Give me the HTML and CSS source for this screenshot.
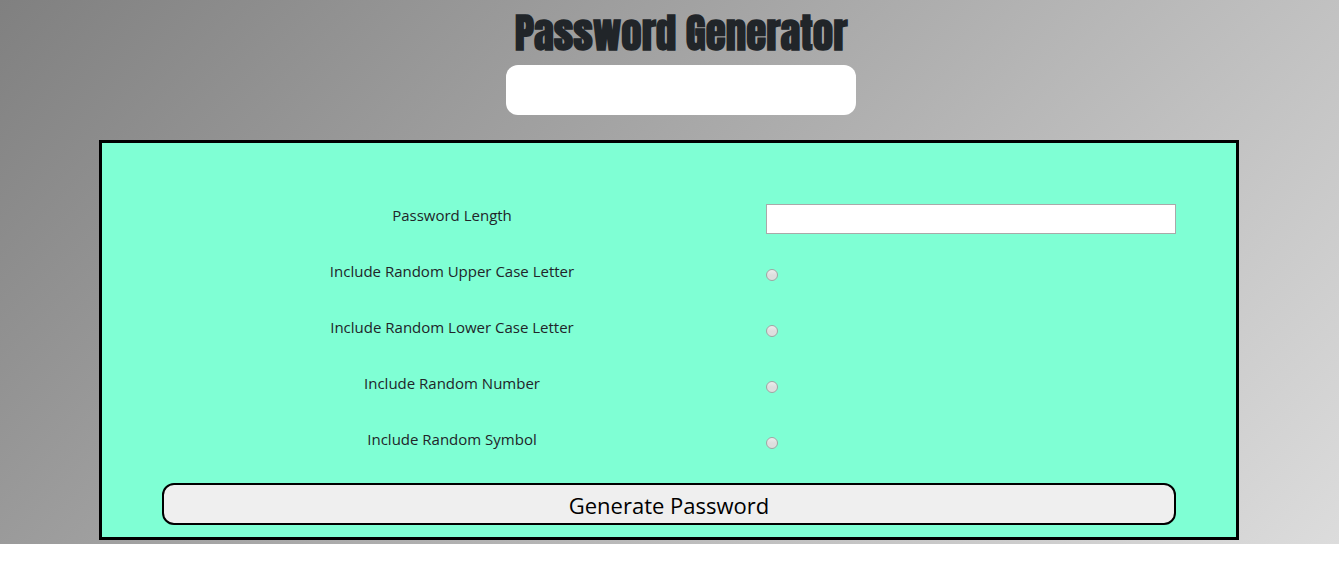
FILE: index.html
```html
<!DOCTYPE html>
<html lang="en">
<head>
<meta charset="utf-8">
<title>Password Generator</title>
<link rel="stylesheet" href="styles.css">
</head>
<body>
<main class="page">
  <header class="header">
    <h1 class="title">Password Generator</h1>
    <output class="result" aria-label="Generated password"></output>
  </header>
  <form class="panel">
    <div class="row">
      <label class="label" for="length">Password Length</label>
      <div class="field"><input class="text" id="length" type="text"></div>
    </div>
    <div class="row">
      <label class="label" for="upper">Include Random Upper Case Letter</label>
      <div class="field"><input class="radio" id="upper" type="radio"></div>
    </div>
    <div class="row">
      <label class="label" for="lower">Include Random Lower Case Letter</label>
      <div class="field"><input class="radio" id="lower" type="radio"></div>
    </div>
    <div class="row">
      <label class="label" for="number">Include Random Number</label>
      <div class="field"><input class="radio" id="number" type="radio"></div>
    </div>
    <div class="row">
      <label class="label" for="symbol">Include Random Symbol</label>
      <div class="field"><input class="radio" id="symbol" type="radio"></div>
    </div>
    <button class="generate" type="button">Generate Password</button>
  </form>
</main>
</body>
</html>
```
FILE: styles.css
```css
* {
  box-sizing: border-box;
}

body {
  margin: 0;
  background: #fff;
  color: #212529;
  font-family: "Segoe UI", "Open Sans", "Noto Sans", sans-serif;
  font-size: 15px;
  line-height: 24px;
}

.page {
  padding: 8px 100px 4px 99px;
  background: linear-gradient(135deg, #808080, #dcdcdc);
}

.header {
  display: flex;
  flex-direction: column;
  align-items: center;
  gap: 8px;
  padding-left: 24px;
}

.title {
  margin: 0;
  padding-top: 1px;
  font-family: Impact, "Anton", "Roboto", sans-serif;
  font-size: 41px;
  font-weight: 900;
  line-height: 48px;
}

.result {
  width: 350px;
  height: 50px;
  border-radius: 12px;
  background: #fff;
}

.panel {
  margin-top: 25px;
  padding: 60px 60px 12px;
  border: 3px solid #000;
  background: #7fffd4;
}

.row {
  display: grid;
  grid-template-columns: 580fr 410fr;
  column-gap: 24px;
  height: 56px;
}

.label {
  text-align: center;
}

.field {
  display: flex;
  align-items: flex-start;
}

.text {
  width: 100%;
  height: 30px;
  margin-top: 1px;
  border: 1px solid #a9a9a9;
  font: inherit;
}

.radio {
  appearance: none;
  width: 12px;
  height: 12px;
  margin: 10px 0 0;
  border: 1px solid #a3a3a3;
  border-radius: 50%;
  background: linear-gradient(#ededed, #dedede 50%);
}

.radio:checked {
  background: #444;
}

.generate {
  display: block;
  width: 100%;
  height: 42px;
  padding: 2px 0 0;
  border: 2px solid #000;
  border-radius: 12px;
  background: #efefef;
  color: #000;
  font: inherit;
  font-size: 22px;
}
```
